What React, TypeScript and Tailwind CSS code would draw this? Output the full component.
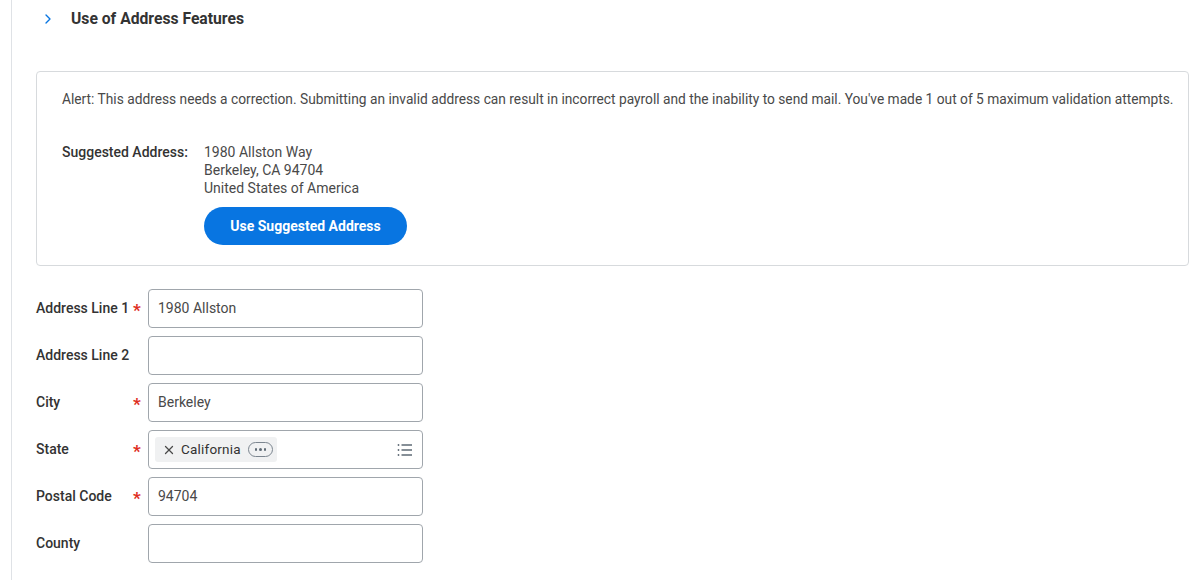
import { ChevronRight, X } from "lucide-react";

const rows = [
  { label: "Address Line 1", required: true, value: "1980 Allston" },
  { label: "Address Line 2", required: false, value: "" },
  { label: "City", required: true, value: "Berkeley" },
  { label: "State", required: true, value: "__state" },
  { label: "Postal Code", required: true, value: "94704" },
  { label: "County", required: false, value: "" },
];

function ListIcon() {
  return (
    <svg width="16" height="14" viewBox="0 0 16 14" fill="none" stroke="#5e6a75" strokeWidth="1.5">
      <circle cx="1.5" cy="2" r="0.9" fill="#5e6a75" stroke="none" />
      <circle cx="1.5" cy="7" r="0.9" fill="#5e6a75" stroke="none" />
      <circle cx="1.5" cy="12" r="0.9" fill="#5e6a75" stroke="none" />
      <line x1="4.5" y1="2" x2="15" y2="2" />
      <line x1="4.5" y1="7" x2="15" y2="7" />
      <line x1="4.5" y1="12" x2="15" y2="12" />
    </svg>
  );
}

function StateValue() {
  return (
    <div className="flex items-center justify-between w-full pl-[6px] pr-[9px]">
      <div className="flex items-center h-[25px] bg-[#f0f1f2] rounded-[3px] pl-[7px] pr-[4px] gap-[5px]">
        <X size={14} strokeWidth={2.2} className="text-[#494949]" />
        <span className="text-[13.5px] text-[#333] tracking-[0.2px]">California</span>
        <span className="ml-[2px] flex items-center justify-center w-[25px] h-[15px] rounded-full border border-[#7b858f] gap-[2px]">
          <span className="w-[2.5px] h-[2.5px] rounded-full bg-[#5e6a75]" />
          <span className="w-[2.5px] h-[2.5px] rounded-full bg-[#5e6a75]" />
          <span className="w-[2.5px] h-[2.5px] rounded-full bg-[#5e6a75]" />
        </span>
      </div>
      <ListIcon />
    </div>
  );
}

export default function App() {
  return (
    <div className="w-[1200px] h-[580px] bg-white overflow-hidden flex font-['Roboto',sans-serif] text-[#333]">
      <div className="w-[12px] shrink-0 border-r border-[#dfe2e6]" />
      <div className="flex-1 pl-[24px] pr-[11px]">
        <div className="flex items-center h-[38px] pl-[4px]">
          <ChevronRight size={16} strokeWidth={2} className="text-[#0875e1]" />
          <span className="ml-[15px] text-[15.7px] font-bold text-[#333]">Use of Address Features</span>
        </div>

        <div className="mt-[33px] border border-[#d7dadd] rounded-[4px] pl-[25px] pt-[18px] pb-[19px]">
          <p className="text-[13.75px] text-[#494949] leading-[18px] whitespace-nowrap">
            Alert: This address needs a correction. Submitting an invalid address can result in incorrect payroll and the inability to send mail. You've made 1 out of 5 maximum validation attempts.
          </p>
          <div className="flex mt-[35px]">
            <div className="w-[142px] text-[14px] font-medium leading-[18px] text-[#333]">Suggested Address:</div>
            <div className="flex flex-col">
              <div className="text-[14px] leading-[18px] text-[#494949]">1980 Allston Way</div>
              <div className="text-[14px] leading-[18px] text-[#494949]">Berkeley, CA 94704</div>
              <div className="text-[14px] leading-[18px] text-[#494949]">United States of America</div>
              <button className="mt-[10px] mb-[1px] w-[203px] h-[38px] rounded-full bg-[#0875e1] text-white text-[14px] font-bold">
                Use Suggested Address
              </button>
            </div>
          </div>
        </div>

        <div className="mt-[23px] flex flex-col gap-[8px]">
          {rows.map((r) => (
            <div key={r.label} className="flex items-center h-[39px]">
              <div className="w-[97px] text-[14px] font-medium text-[#333]">{r.label}</div>
              <div className="w-[15px] text-[#de2e21] text-[17px] font-bold leading-none pt-[4px]">{r.required ? "*" : ""}</div>
              <div className="w-[275px] h-[39px] border border-[#a0a6ac] rounded-[4px] flex items-center">
                {r.value === "__state" ? (
                  <StateValue />
                ) : (
                  <span className="pl-[9px] text-[14px] text-[#494949]">{r.value}</span>
                )}
              </div>
            </div>
          ))}
        </div>
      </div>
    </div>
  );
}
